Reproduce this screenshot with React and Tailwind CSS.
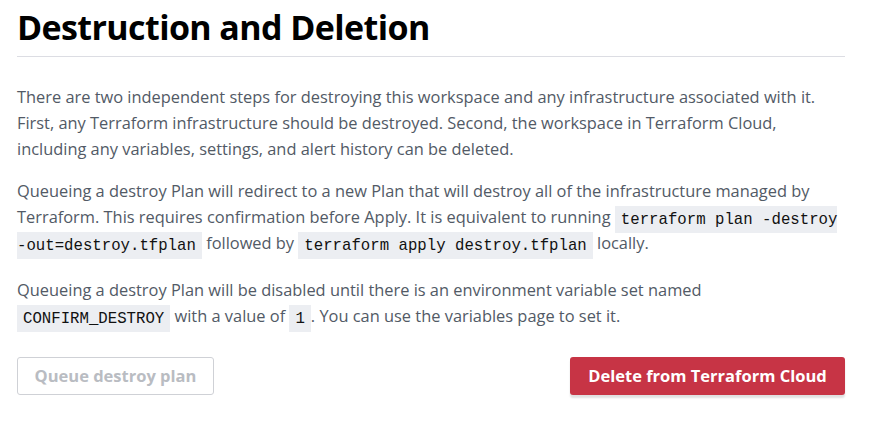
import { useState } from 'react'

function Code({ children }) {
  return (
    <code className="bg-[#eceef2] px-[6px] py-[4.5px] leading-none text-[#111] font-['Liberation_Mono',monospace] text-[15.7px]">
      {children}
    </code>
  )
}

export default function App() {
  const [queued, setQueued] = useState(false)

  return (
    <div className="bg-white min-h-screen pl-[17px] pt-[4px] pr-[38px] font-['Open_Sans',sans-serif]">
      {/* Header */}
      <div className="border-b border-[#dcdde3] pb-[6px]">
        <h1 className="text-[34px] font-bold leading-[46px] text-black tracking-[-0.6px]">
          Destruction and Deletion
        </h1>
      </div>

      <div className="pt-[27px] text-[16.4px] leading-[26px] text-[#525a66]">
        <p className="mb-[16px]">
          There are two independent steps for destroying this workspace and any infrastructure associated with it.
          First, any Terraform infrastructure should be destroyed. Second, the workspace in Terraform Cloud,
          including any variables, settings, and alert history can be deleted.
        </p>
        <p className="mb-[21px] mr-[-8px]">
          Queueing a destroy Plan will redirect to a new Plan that will destroy all of the infrastructure managed by
          Terraform. This requires confirmation before Apply. It is equivalent to running{' '}
          <Code>
            terraform plan <span className="whitespace-nowrap">-destroy</span>{' '}
            <span className="whitespace-nowrap">-out=destroy.tfplan</span>
          </Code>{' '}
          followed by <Code>terraform apply destroy.tfplan</Code> locally.
        </p>
        <p>
          Queueing a destroy Plan will be disabled until there is an environment variable set named{' '}
          <Code>CONFIRM_DESTROY</Code> with a value of <Code>1</Code>. You can use the variables page to set it.
        </p>
      </div>

      {/* Actions */}
      <div className="flex justify-between items-start mt-[28px]">
        <button
          disabled
          onClick={() => setQueued(!queued)}
          className="h-[38px] w-[197px] rounded-[3px] border border-[#cfd1d6] bg-white text-[16.5px] font-bold text-[#b9bcc2]"
        >
          Queue destroy plan
        </button>
        <button className="h-[38px] w-[275px] rounded-[3px] bg-[#c73445] text-[16.5px] font-bold text-white shadow-[0_3px_2px_rgba(0,0,0,0.12)]">
          Delete from Terraform Cloud
        </button>
      </div>
    </div>
  )
}
